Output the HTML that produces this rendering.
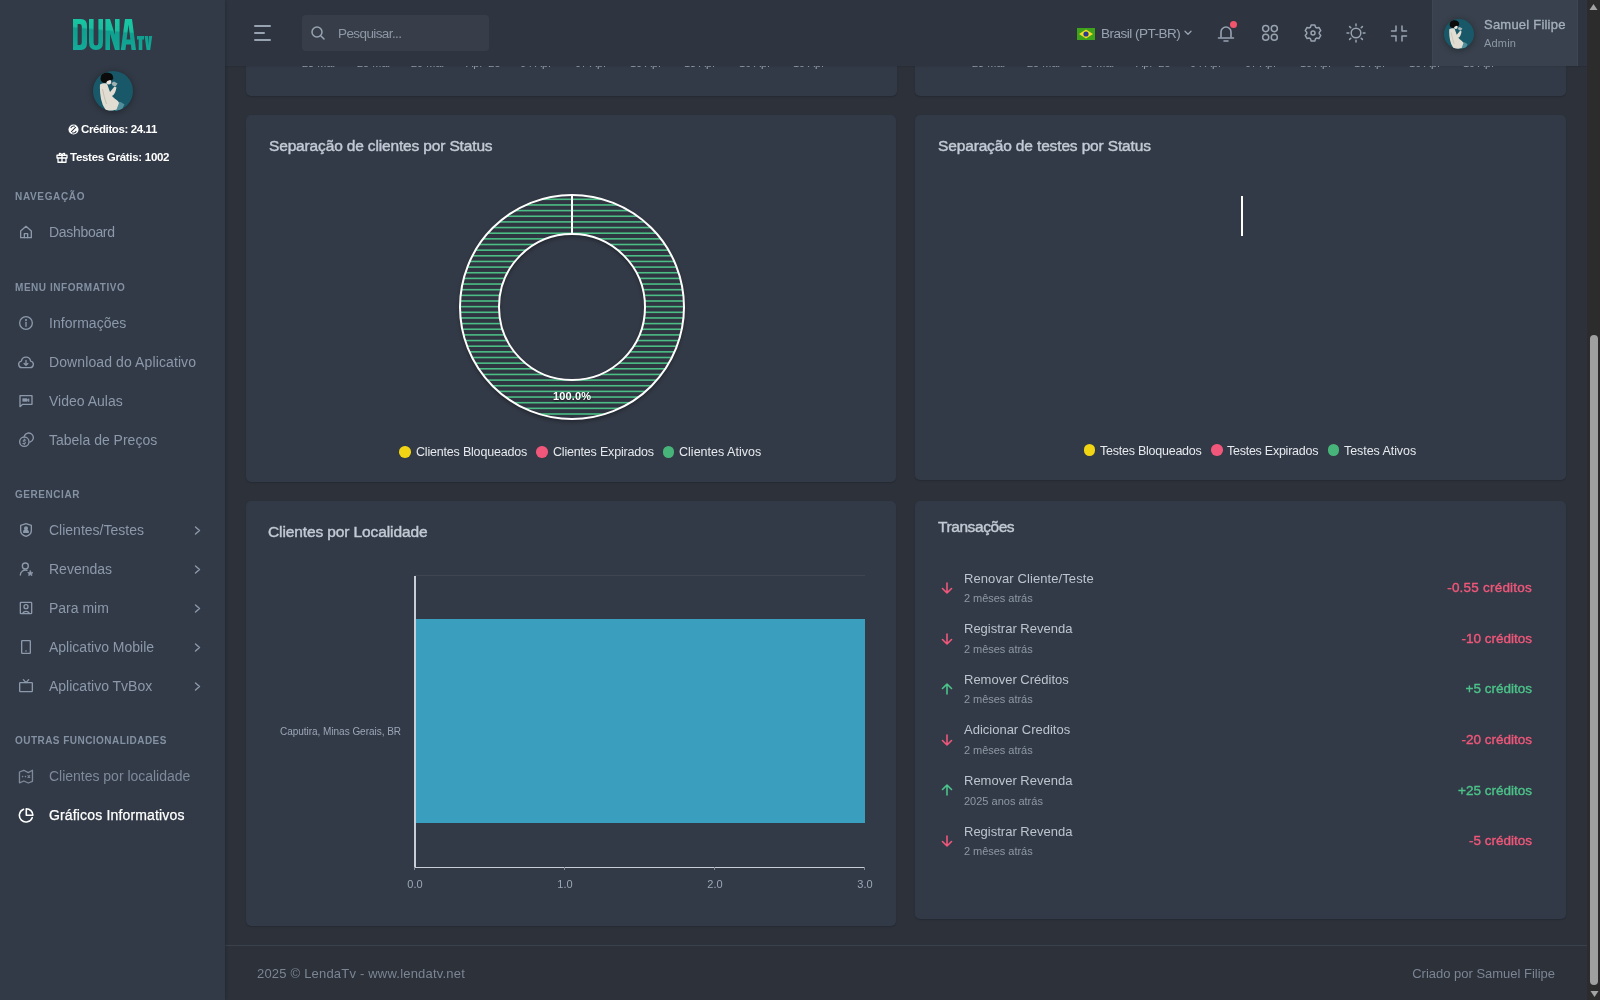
<!DOCTYPE html>
<html lang="pt-BR">
<head>
<meta charset="utf-8">
<title>Gráficos Informativos</title>
<style>
*{box-sizing:border-box;margin:0;padding:0}
html,body{width:1600px;height:1000px;overflow:hidden;background:#2c313a;font-family:"Liberation Sans",sans-serif;}
.abs{position:absolute;white-space:nowrap}
.abs svg{display:block}
.tx{position:absolute;white-space:nowrap;will-change:transform}
#side{position:absolute;left:0;top:0;width:225px;height:1000px;background:#323a47;z-index:6;box-shadow:1px 0 3px rgba(0,0,0,.18)}
#top{position:absolute;left:225px;top:0;width:1362px;height:66px;background:#2f3540;z-index:5;box-shadow:0 1px 1px rgba(0,0,0,.06)}
#content{position:absolute;left:0;top:0;width:1600px;height:1000px}
.card{position:absolute;background:#333a47;border-radius:5px;box-shadow:0 1px 1.5px rgba(0,0,0,.16)}
#scroll{position:absolute;left:1587px;top:0;width:13px;height:1000px;background:#2c2c2c;z-index:9}
</style>
</head>
<body>
<div id="content"><div class="card" style="left:246px;top:-200px;width:650.5px;height:295.5px"></div><div class="card" style="left:915px;top:-200px;width:651px;height:295.5px"></div><div class="tx" id="axl0" style="left:302.0px;top:58.19px;font-size:11px;line-height:11px;font-weight:normal;color:#98a3b1;letter-spacing:0.000px;">23 Mar</div><div class="tx" id="axr0" style="left:972.0px;top:58.19px;font-size:11px;line-height:11px;font-weight:normal;color:#98a3b1;letter-spacing:0.000px;">23 Mar</div><div class="tx" id="axl1" style="left:356.6px;top:58.19px;font-size:11px;line-height:11px;font-weight:normal;color:#98a3b1;letter-spacing:0.000px;">25 Mar</div><div class="tx" id="axr1" style="left:1026.6px;top:58.19px;font-size:11px;line-height:11px;font-weight:normal;color:#98a3b1;letter-spacing:0.000px;">25 Mar</div><div class="tx" id="axl2" style="left:411.2px;top:58.19px;font-size:11px;line-height:11px;font-weight:normal;color:#98a3b1;letter-spacing:0.000px;">29 Mar</div><div class="tx" id="axr2" style="left:1081.2px;top:58.19px;font-size:11px;line-height:11px;font-weight:normal;color:#98a3b1;letter-spacing:0.000px;">29 Mar</div><div class="tx" id="axl3" style="left:465.8px;top:58.19px;font-size:11px;line-height:11px;font-weight:normal;color:#98a3b1;letter-spacing:0.000px;">Apr '25</div><div class="tx" id="axr3" style="left:1135.8px;top:58.19px;font-size:11px;line-height:11px;font-weight:normal;color:#98a3b1;letter-spacing:0.000px;">Apr '25</div><div class="tx" id="axl4" style="left:520.4px;top:58.19px;font-size:11px;line-height:11px;font-weight:normal;color:#98a3b1;letter-spacing:0.000px;">04 Apr</div><div class="tx" id="axr4" style="left:1190.4px;top:58.19px;font-size:11px;line-height:11px;font-weight:normal;color:#98a3b1;letter-spacing:0.000px;">04 Apr</div><div class="tx" id="axl5" style="left:575.0px;top:58.19px;font-size:11px;line-height:11px;font-weight:normal;color:#98a3b1;letter-spacing:0.000px;">07 Apr</div><div class="tx" id="axr5" style="left:1245.0px;top:58.19px;font-size:11px;line-height:11px;font-weight:normal;color:#98a3b1;letter-spacing:0.000px;">07 Apr</div><div class="tx" id="axl6" style="left:629.6px;top:58.19px;font-size:11px;line-height:11px;font-weight:normal;color:#98a3b1;letter-spacing:0.000px;">10 Apr</div><div class="tx" id="axr6" style="left:1299.6px;top:58.19px;font-size:11px;line-height:11px;font-weight:normal;color:#98a3b1;letter-spacing:0.000px;">10 Apr</div><div class="tx" id="axl7" style="left:684.2px;top:58.19px;font-size:11px;line-height:11px;font-weight:normal;color:#98a3b1;letter-spacing:0.000px;">13 Apr</div><div class="tx" id="axr7" style="left:1354.2px;top:58.19px;font-size:11px;line-height:11px;font-weight:normal;color:#98a3b1;letter-spacing:0.000px;">13 Apr</div><div class="tx" id="axl8" style="left:738.8px;top:58.19px;font-size:11px;line-height:11px;font-weight:normal;color:#98a3b1;letter-spacing:0.000px;">16 Apr</div><div class="tx" id="axr8" style="left:1408.8px;top:58.19px;font-size:11px;line-height:11px;font-weight:normal;color:#98a3b1;letter-spacing:0.000px;">16 Apr</div><div class="tx" id="axl9" style="left:793.4000000000001px;top:58.19px;font-size:11px;line-height:11px;font-weight:normal;color:#98a3b1;letter-spacing:0.000px;">19 Apr</div><div class="tx" id="axr9" style="left:1463.4px;top:58.19px;font-size:11px;line-height:11px;font-weight:normal;color:#98a3b1;letter-spacing:0.000px;">19 Apr</div><div class="card" style="left:246px;top:115px;width:650.3px;height:367px"></div><div class="card" style="left:915px;top:115px;width:651px;height:365px"></div><div class="tx" id="c2t" style="left:268.9px;top:138.28px;font-size:15.5px;line-height:15.5px;font-weight:normal;color:#c2cad5;letter-spacing:-0.153px;-webkit-text-stroke:0.43px #c2cad5;">Separação de clientes por Status</div><div class="tx" id="c3t" style="left:938px;top:138.28px;font-size:15.5px;line-height:15.5px;font-weight:normal;color:#c2cad5;letter-spacing:-0.143px;-webkit-text-stroke:0.43px #c2cad5;">Separação de testes por Status</div><svg class="abs" style="left:452px;top:187px" width="240" height="240" viewBox="0 0 240 240">
<defs><clipPath id="dn"><path fill-rule="evenodd" d="M120,8A112,112 0 1 0 120.01,8ZM120,47A73,73 0 1 1 119.99,47Z"/></clipPath>
<filter id="sh" x="-20%" y="-20%" width="140%" height="140%"><feDropShadow dx="0" dy="2" stdDeviation="2.5" flood-color="#000" flood-opacity="0.45"/></filter></defs>
<circle cx="120" cy="120" r="92.5" fill="none" stroke="#313843" stroke-width="39" filter="url(#sh)"/>
<g clip-path="url(#dn)"><rect width="240" height="240" fill="#2f3541"/><g transform="translate(0,11.5)"><rect x="0" y="0.00" width="240" height="1.6" fill="#4cbd85"/><rect x="0" y="5.65" width="240" height="1.6" fill="#4cbd85"/><rect x="0" y="11.30" width="240" height="1.6" fill="#4cbd85"/><rect x="0" y="16.95" width="240" height="1.6" fill="#4cbd85"/><rect x="0" y="22.60" width="240" height="1.6" fill="#4cbd85"/><rect x="0" y="28.25" width="240" height="1.6" fill="#4cbd85"/><rect x="0" y="33.90" width="240" height="1.6" fill="#4cbd85"/><rect x="0" y="39.55" width="240" height="1.6" fill="#4cbd85"/><rect x="0" y="45.20" width="240" height="1.6" fill="#4cbd85"/><rect x="0" y="50.85" width="240" height="1.6" fill="#4cbd85"/><rect x="0" y="56.50" width="240" height="1.6" fill="#4cbd85"/><rect x="0" y="62.15" width="240" height="1.6" fill="#4cbd85"/><rect x="0" y="67.80" width="240" height="1.6" fill="#4cbd85"/><rect x="0" y="73.45" width="240" height="1.6" fill="#4cbd85"/><rect x="0" y="79.10" width="240" height="1.6" fill="#4cbd85"/><rect x="0" y="84.75" width="240" height="1.6" fill="#4cbd85"/><rect x="0" y="90.40" width="240" height="1.6" fill="#4cbd85"/><rect x="0" y="96.05" width="240" height="1.6" fill="#4cbd85"/><rect x="0" y="101.70" width="240" height="1.6" fill="#4cbd85"/><rect x="0" y="107.35" width="240" height="1.6" fill="#4cbd85"/><rect x="0" y="113.00" width="240" height="1.6" fill="#4cbd85"/><rect x="0" y="118.65" width="240" height="1.6" fill="#4cbd85"/><rect x="0" y="124.30" width="240" height="1.6" fill="#4cbd85"/><rect x="0" y="129.95" width="240" height="1.6" fill="#4cbd85"/><rect x="0" y="135.60" width="240" height="1.6" fill="#4cbd85"/><rect x="0" y="141.25" width="240" height="1.6" fill="#4cbd85"/><rect x="0" y="146.90" width="240" height="1.6" fill="#4cbd85"/><rect x="0" y="152.55" width="240" height="1.6" fill="#4cbd85"/><rect x="0" y="158.20" width="240" height="1.6" fill="#4cbd85"/><rect x="0" y="163.85" width="240" height="1.6" fill="#4cbd85"/><rect x="0" y="169.50" width="240" height="1.6" fill="#4cbd85"/><rect x="0" y="175.15" width="240" height="1.6" fill="#4cbd85"/><rect x="0" y="180.80" width="240" height="1.6" fill="#4cbd85"/><rect x="0" y="186.45" width="240" height="1.6" fill="#4cbd85"/><rect x="0" y="192.10" width="240" height="1.6" fill="#4cbd85"/><rect x="0" y="197.75" width="240" height="1.6" fill="#4cbd85"/><rect x="0" y="203.40" width="240" height="1.6" fill="#4cbd85"/><rect x="0" y="209.05" width="240" height="1.6" fill="#4cbd85"/><rect x="0" y="214.70" width="240" height="1.6" fill="#4cbd85"/><rect x="0" y="220.35" width="240" height="1.6" fill="#4cbd85"/><rect x="0" y="226.00" width="240" height="1.6" fill="#4cbd85"/><rect x="0" y="231.65" width="240" height="1.6" fill="#4cbd85"/><rect x="0" y="237.30" width="240" height="1.6" fill="#4cbd85"/><rect x="0" y="242.95" width="240" height="1.6" fill="#4cbd85"/><rect x="0" y="248.60" width="240" height="1.6" fill="#4cbd85"/></g></g>
<circle cx="120" cy="120" r="112" fill="none" stroke="#fff" stroke-width="2"/>
<circle cx="120" cy="120" r="73" fill="none" stroke="#fff" stroke-width="2"/>
<path d="M120 8V47" stroke="#fff" stroke-width="2"/>
</svg><div class="tx" id="pct" style="left:422px;width:300px;text-align:center;top:391.19px;font-size:11px;line-height:11px;font-weight:bold;color:#ffffff;letter-spacing:0.138px;text-shadow:0 1px 2px rgba(0,0,0,.6)">100.0%</div><div class="abs" style="left:399.4px;top:446.45px;width:11.5px;height:11.5px;border-radius:50%;background:#f1d413"></div><div class="tx" id="lg1" style="left:415.9px;top:446.02px;font-size:12.5px;line-height:12.5px;font-weight:normal;color:#e6e9ed;letter-spacing:-0.193px;">Clientes Bloqueados</div><div class="abs" style="left:536.25px;top:446.45px;width:11.5px;height:11.5px;border-radius:50%;background:#f1577a"></div><div class="tx" id="lg2" style="left:552.5px;top:446.02px;font-size:12.5px;line-height:12.5px;font-weight:normal;color:#e6e9ed;letter-spacing:-0.189px;">Clientes Expirados</div><div class="abs" style="left:662.5px;top:446.45px;width:11.5px;height:11.5px;border-radius:50%;background:#47b57a"></div><div class="tx" id="lg3" style="left:678.8px;top:446.02px;font-size:12.5px;line-height:12.5px;font-weight:normal;color:#e6e9ed;letter-spacing:0.015px;">Clientes Ativos</div><div class="abs" style="left:1083.5px;top:444.35px;width:11.5px;height:11.5px;border-radius:50%;background:#f1d413"></div><div class="tx" id="lg4" style="left:1100px;top:444.62px;font-size:12.5px;line-height:12.5px;font-weight:normal;color:#e6e9ed;letter-spacing:-0.240px;">Testes Bloqueados</div><div class="abs" style="left:1211px;top:444.35px;width:11.5px;height:11.5px;border-radius:50%;background:#f1577a"></div><div class="tx" id="lg5" style="left:1227.2px;top:444.62px;font-size:12.5px;line-height:12.5px;font-weight:normal;color:#e6e9ed;letter-spacing:-0.252px;">Testes Expirados</div><div class="abs" style="left:1327.8px;top:444.35px;width:11.5px;height:11.5px;border-radius:50%;background:#47b57a"></div><div class="tx" id="lg6" style="left:1344px;top:444.62px;font-size:12.5px;line-height:12.5px;font-weight:normal;color:#e6e9ed;letter-spacing:-0.063px;">Testes Ativos</div><div class="abs" style="left:1240.5px;top:195.5px;width:2px;height:40px;background:#fff"></div><div class="card" style="left:246px;top:501px;width:650.3px;height:424.6px"></div><div class="tx" id="c4t" style="left:268.4px;top:523.68px;font-size:15.5px;line-height:15.5px;font-weight:normal;color:#c2cad5;letter-spacing:-0.109px;-webkit-text-stroke:0.43px #c2cad5;">Clientes por Localidade</div><div class="abs" style="left:414.5px;top:575px;width:450px;height:1px;background:#3f4652"></div><div class="abs" style="left:414px;top:619.2px;width:450.7px;height:204.3px;background:#3a9ebf"></div><div class="abs" style="left:414px;top:575.5px;width:1.5px;height:292px;background:#c9ced6"></div><div class="abs" style="left:414px;top:866.5px;width:451px;height:1.5px;background:#c9ced6"></div><div class="abs" style="left:414.1px;top:867px;width:1px;height:3px;background:#7f8793"></div><div class="tx" id="xt0" style="left:264.6px;width:300px;text-align:center;top:878.69px;font-size:11px;line-height:11px;font-weight:normal;color:#9aa6b6;letter-spacing:0.000px;">0.0</div><div class="abs" style="left:564.13px;top:867px;width:1px;height:3px;background:#7f8793"></div><div class="tx" id="xt1" style="left:414.63px;width:300px;text-align:center;top:878.69px;font-size:11px;line-height:11px;font-weight:normal;color:#9aa6b6;letter-spacing:0.000px;">1.0</div><div class="abs" style="left:714.1600000000001px;top:867px;width:1px;height:3px;background:#7f8793"></div><div class="tx" id="xt2" style="left:564.6600000000001px;width:300px;text-align:center;top:878.69px;font-size:11px;line-height:11px;font-weight:normal;color:#9aa6b6;letter-spacing:0.000px;">2.0</div><div class="abs" style="left:864.19px;top:867px;width:1px;height:3px;background:#7f8793"></div><div class="tx" id="xt3" style="left:714.69px;width:300px;text-align:center;top:878.69px;font-size:11px;line-height:11px;font-weight:normal;color:#9aa6b6;letter-spacing:0.000px;">3.0</div><div class="tx" id="ylab" style="left:0.6999999999999886px;width:400px;text-align:right;top:727.33px;font-size:10px;line-height:10px;font-weight:normal;color:#9aa6b6;letter-spacing:-0.029px;">Caputira, Minas Gerais, BR</div><div class="card" style="left:915px;top:501px;width:651px;height:418px"></div><div class="tx" id="c5t" style="left:937.7px;top:518.58px;font-size:15.5px;line-height:15.5px;font-weight:normal;color:#c2cad5;letter-spacing:-0.423px;-webkit-text-stroke:0.43px #c2cad5;">Transações</div><div class="abs" style="left:940.5px;top:582.0px;color:#f1577a"><svg width="12" height="12" viewBox="0 0 12 12" fill="none" stroke="currentColor" stroke-width="1.6" stroke-linecap="round" stroke-linejoin="round" ><path d="M6 1v10M1.5 6.5L6 11l4.5-4.5"/></svg></div><div class="tx" id="ra0" style="left:964.4px;top:571.50px;font-size:13px;line-height:13px;font-weight:normal;color:#bcc4cf;letter-spacing:0.090px;">Renovar Cliente/Teste</div><div class="tx" id="rb0" style="left:964.4px;top:593.19px;font-size:11px;line-height:11px;font-weight:normal;color:#8e98a5;letter-spacing:-0.033px;">2 mêses atrás</div><div class="tx" id="rc0" style="left:1132.4px;width:400px;text-align:right;top:581.07px;font-size:13.5px;line-height:13.5px;font-weight:normal;color:#f1577a;letter-spacing:0.216px;-webkit-text-stroke:0.38px #f1577a;">-0.55 créditos</div><div class="abs" style="left:940.5px;top:632.62px;color:#f1577a"><svg width="12" height="12" viewBox="0 0 12 12" fill="none" stroke="currentColor" stroke-width="1.6" stroke-linecap="round" stroke-linejoin="round" ><path d="M6 1v10M1.5 6.5L6 11l4.5-4.5"/></svg></div><div class="tx" id="ra1" style="left:964.4px;top:622.12px;font-size:13px;line-height:13px;font-weight:normal;color:#bcc4cf;letter-spacing:0.000px;">Registrar Revenda</div><div class="tx" id="rb1" style="left:964.4px;top:643.81px;font-size:11px;line-height:11px;font-weight:normal;color:#8e98a5;letter-spacing:-0.033px;">2 mêses atrás</div><div class="tx" id="rc1" style="left:1132.4px;width:400px;text-align:right;top:631.69px;font-size:13.5px;line-height:13.5px;font-weight:normal;color:#f1577a;letter-spacing:0.000px;-webkit-text-stroke:0.38px #f1577a;">-10 créditos</div><div class="abs" style="left:940.5px;top:683.24px;color:#4bc38a"><svg width="12" height="12" viewBox="0 0 12 12" fill="none" stroke="currentColor" stroke-width="1.6" stroke-linecap="round" stroke-linejoin="round" ><path d="M6 11V1M1.5 5.5L6 1l4.5 4.5"/></svg></div><div class="tx" id="ra2" style="left:964.4px;top:672.74px;font-size:13px;line-height:13px;font-weight:normal;color:#bcc4cf;letter-spacing:0.000px;">Remover Créditos</div><div class="tx" id="rb2" style="left:964.4px;top:694.43px;font-size:11px;line-height:11px;font-weight:normal;color:#8e98a5;letter-spacing:-0.033px;">2 mêses atrás</div><div class="tx" id="rc2" style="left:1132.4px;width:400px;text-align:right;top:682.31px;font-size:13.5px;line-height:13.5px;font-weight:normal;color:#4bc38a;letter-spacing:0.000px;-webkit-text-stroke:0.38px #4bc38a;">+5 créditos</div><div class="abs" style="left:940.5px;top:733.86px;color:#f1577a"><svg width="12" height="12" viewBox="0 0 12 12" fill="none" stroke="currentColor" stroke-width="1.6" stroke-linecap="round" stroke-linejoin="round" ><path d="M6 1v10M1.5 6.5L6 11l4.5-4.5"/></svg></div><div class="tx" id="ra3" style="left:964.4px;top:723.36px;font-size:13px;line-height:13px;font-weight:normal;color:#bcc4cf;letter-spacing:0.000px;">Adicionar Creditos</div><div class="tx" id="rb3" style="left:964.4px;top:745.05px;font-size:11px;line-height:11px;font-weight:normal;color:#8e98a5;letter-spacing:-0.033px;">2 mêses atrás</div><div class="tx" id="rc3" style="left:1132.4px;width:400px;text-align:right;top:732.93px;font-size:13.5px;line-height:13.5px;font-weight:normal;color:#f1577a;letter-spacing:0.000px;-webkit-text-stroke:0.38px #f1577a;">-20 créditos</div><div class="abs" style="left:940.5px;top:784.48px;color:#4bc38a"><svg width="12" height="12" viewBox="0 0 12 12" fill="none" stroke="currentColor" stroke-width="1.6" stroke-linecap="round" stroke-linejoin="round" ><path d="M6 11V1M1.5 5.5L6 1l4.5 4.5"/></svg></div><div class="tx" id="ra4" style="left:964.4px;top:773.98px;font-size:13px;line-height:13px;font-weight:normal;color:#bcc4cf;letter-spacing:0.000px;">Remover Revenda</div><div class="tx" id="rb4" style="left:964.4px;top:795.67px;font-size:11px;line-height:11px;font-weight:normal;color:#8e98a5;letter-spacing:0.000px;">2025 anos atrás</div><div class="tx" id="rc4" style="left:1132.4px;width:400px;text-align:right;top:783.55px;font-size:13.5px;line-height:13.5px;font-weight:normal;color:#4bc38a;letter-spacing:0.000px;-webkit-text-stroke:0.38px #4bc38a;">+25 créditos</div><div class="abs" style="left:940.5px;top:835.1px;color:#f1577a"><svg width="12" height="12" viewBox="0 0 12 12" fill="none" stroke="currentColor" stroke-width="1.6" stroke-linecap="round" stroke-linejoin="round" ><path d="M6 1v10M1.5 6.5L6 11l4.5-4.5"/></svg></div><div class="tx" id="ra5" style="left:964.4px;top:824.60px;font-size:13px;line-height:13px;font-weight:normal;color:#bcc4cf;letter-spacing:0.000px;">Registrar Revenda</div><div class="tx" id="rb5" style="left:964.4px;top:846.29px;font-size:11px;line-height:11px;font-weight:normal;color:#8e98a5;letter-spacing:-0.033px;">2 mêses atrás</div><div class="tx" id="rc5" style="left:1132.4px;width:400px;text-align:right;top:834.17px;font-size:13.5px;line-height:13.5px;font-weight:normal;color:#f1577a;letter-spacing:0.000px;-webkit-text-stroke:0.38px #f1577a;">-5 créditos</div><div class="abs" style="left:225px;top:945px;width:1362px;height:1px;background:#3a414b"></div><div class="tx" id="f1" style="left:257.2px;top:967.00px;font-size:13px;line-height:13px;font-weight:normal;color:#7b8594;letter-spacing:0.201px;">2025 © LendaTv - www.lendatv.net</div><div class="tx" id="f2" style="left:1155px;width:400px;text-align:right;top:967.00px;font-size:13px;line-height:13px;font-weight:normal;color:#7b8594;letter-spacing:-0.012px;">Criado por Samuel Filipe</div></div>
<div id="side"><svg class="abs" style="left:0;top:0" width="225" height="60" viewBox="0 0 225 60">
<defs><linearGradient id="lg" x1="76" y1="19" x2="73" y2="50" gradientUnits="userSpaceOnUse">
<stop offset="0" stop-color="#18c4a2"/><stop offset="0.24" stop-color="#17bf9f"/><stop offset="0.30" stop-color="#0f9f8e"/><stop offset="0.7" stop-color="#11a594"/><stop offset="1" stop-color="#15ad9a"/></linearGradient></defs>
<g fill="url(#lg)" fill-rule="evenodd">
<path d="M73,19H81Q87,19 87,26V43Q87,50 81,50H73ZM77.6,24V45H79.6Q81.8,45 81.8,42V27Q81.8,24 79.6,24Z"/>
<path d="M89,19H93.6V43Q93.6,45.5 96,45.5Q98.4,45.5 98.4,43V19H103V42Q103,50 96,50Q89,50 89,42Z"/>
<path d="M105.4,19H110L115,35V19H119.6V50H115L110,33.5V50H105.4Z"/>
<path d="M120.8,50L125,19H132L136,50H131.5L130.9,44.5H126.1L125.4,50ZM126.6,39.5H130.4L128.5,24.5Z"/>
<path d="M137,36H144V39.6H142.3V50H138.7V39.6H137Z"/>
<path d="M144.6,36H148L148.4,45.5L148.9,36H152.2L150.2,50H146.6Z"/>
</g></svg><svg class="abs" style="left:93px;top:71px;filter:drop-shadow(0 1px 3px rgba(0,0,0,.35))" width="40" height="40" viewBox="0 0 40 40">
<defs><clipPath id="ca"><circle cx="20" cy="20" r="20"/></clipPath></defs>
<circle cx="20" cy="20" r="20" fill="#195868"/>
<g clip-path="url(#ca)">
<path d="M21.5,31 Q27,29.5 31.5,33.5 L29,38.5 Q25,40 22,39.5 Z" fill="#4f8e9a"/>
<path d="M7,13.5 Q10,11.5 14,12.5 L17,21 L21.5,15.5 L23.5,16.5 Q22,24 19,25 L21,27 Q25,29.5 26,32 L23.5,38.5 Q17,40.5 13,39.5 Q9,34 8,28 Q6.5,20 7,13.5 Z" fill="#e2ddd2"/>
<path d="M9.5,18 Q11,26 13.5,33" stroke="#c2bcaf" stroke-width="0.9" fill="none"/>
<path d="M18.5,12 L21,10.5 L24.5,12.5 L22.5,15.5 L19.5,14.5 Z" fill="#9fb3b5"/>
<ellipse cx="15.8" cy="10.8" rx="2.4" ry="2.6" fill="#efe5de"/>
<path d="M7.5,8 Q7.5,1.5 13.5,1.5 Q20.5,1.5 20.3,7.5 Q19.5,10 17,9 Q14,9.5 12.5,12 Q8,12 7.5,8 Z" fill="#0b0b0b"/>
</g></svg><svg class="abs" style="left:67.5px;top:124px" width="11" height="11" viewBox="0 0 24 24"><circle cx="12" cy="12" r="11" fill="#fff"/><path d="M6 9a7 7 0 0 1 9-4M18 15a7 7 0 0 1-9 4M7 17l10-10" stroke="#313a46" stroke-width="2.4" fill="none"/></svg><svg class="abs" style="left:56px;top:151.5px" width="12" height="11" viewBox="0 0 24 22" fill="none" stroke="#fff" stroke-width="2.6" stroke-linejoin="round"><rect x="2" y="6.5" width="20" height="5.5"/><path d="M4 12v8.5h16V12M12 6.5v14M12 6.5C9.5 1 4.5 2.5 7.5 6.5M12 6.5c2.5-5.5 7.5-4 4.5 0"/></svg><div class="tx" id="cred" style="left:81px;top:124.27px;font-size:11.5px;line-height:11.5px;font-weight:bold;color:#ffffff;letter-spacing:-0.395px;">Créditos: 24.11</div><div class="tx" id="test" style="left:69.5px;top:151.77px;font-size:11.5px;line-height:11.5px;font-weight:bold;color:#ffffff;letter-spacing:-0.285px;">Testes Grátis: 1002</div><div class="tx" id="mt_NAVE" style="left:15px;top:191.84px;font-size:10px;line-height:10px;font-weight:bold;color:#8391a2;letter-spacing:0.654px;">NAVEGAÇÃO</div><div class="abs" style="left:18px;top:224px;color:#8c99aa"><svg width="16" height="16" viewBox="0 0 24 24" fill="none" stroke="currentColor" stroke-width="2" stroke-linecap="round" stroke-linejoin="round" ><path d="M4 10.5L12 3.5L20 10.5V20.5H4Z"/><path d="M9.5 20.5V14.5H14.5V20.5"/></svg></div><div class="tx" id="mi_home" style="left:48.5px;top:225.15px;font-size:14px;line-height:14px;font-weight:normal;color:#8c99aa;letter-spacing:-0.312px;">Dashboard</div><div class="tx" id="mt_MENU" style="left:15px;top:282.54px;font-size:10px;line-height:10px;font-weight:bold;color:#8391a2;letter-spacing:0.550px;">MENU INFORMATIVO</div><div class="abs" style="left:18px;top:315px;color:#8c99aa"><svg width="16" height="16" viewBox="0 0 24 24" fill="none" stroke="currentColor" stroke-width="2" stroke-linecap="round" stroke-linejoin="round" ><circle cx="12" cy="12" r="9.5"/><path d="M12 11v6"/><circle cx="12" cy="7.6" r="0.6" fill="currentColor"/></svg></div><div class="tx" id="mi_info" style="left:48.5px;top:316.15px;font-size:14px;line-height:14px;font-weight:normal;color:#8c99aa;letter-spacing:0.025px;">Informações</div><div class="abs" style="left:18px;top:354px;color:#8c99aa"><svg width="16" height="16" viewBox="0 0 24 24" fill="none" stroke="currentColor" stroke-width="2" stroke-linecap="round" stroke-linejoin="round" ><path d="M6,20.5A5,5 0 0 1 5.08,10.58A7,7 0 0 1 18.92,10.58A5,5 0 0 1 18,20.5Z"/><path d="M12 9.5v7.5M9.2 14.3l2.8 2.8 2.8-2.8"/></svg></div><div class="tx" id="mi_cloud" style="left:48.5px;top:355.15px;font-size:14px;line-height:14px;font-weight:normal;color:#8c99aa;letter-spacing:0.106px;">Download do Aplicativo</div><div class="abs" style="left:18px;top:393px;color:#8c99aa"><svg width="16" height="16" viewBox="0 0 24 24" fill="none" stroke="currentColor" stroke-width="2" stroke-linecap="round" stroke-linejoin="round" ><path d="M3 4h18v13H7l-4 3.5Z"/><path d="M7.5 8.5h6v4h-6zM13.5 10.5l3-2v4z" fill="currentColor" stroke-width="1"/></svg></div><div class="tx" id="mi_video" style="left:48.5px;top:394.15px;font-size:14px;line-height:14px;font-weight:normal;color:#8c99aa;letter-spacing:0.000px;">Video Aulas</div><div class="abs" style="left:18px;top:432px;color:#8c99aa"><svg width="16" height="16" viewBox="0 0 24 24" fill="none" stroke="currentColor" stroke-width="2" stroke-linecap="round" stroke-linejoin="round" ><circle cx="9.5" cy="14.5" r="7"/><path d="M9.3 6.3A7 7 0 1 1 17.9 15.2"/><path d="M11.6 12.2H9a1.3 1.3 0 0 0 0 2.6h1a1.3 1.3 0 0 1 0 2.6H7.3M9.5 10.6v1.4M9.5 17.4v1.4" stroke-width="1.5"/></svg></div><div class="tx" id="mi_coins" style="left:48.5px;top:433.15px;font-size:14px;line-height:14px;font-weight:normal;color:#8c99aa;letter-spacing:0.000px;">Tabela de Preços</div><div class="tx" id="mt_GERE" style="left:15px;top:489.54px;font-size:10px;line-height:10px;font-weight:bold;color:#8391a2;letter-spacing:0.550px;">GERENCIAR</div><div class="abs" style="left:18px;top:522px;color:#8c99aa"><svg width="16" height="16" viewBox="0 0 24 24" fill="none" stroke="currentColor" stroke-width="2" stroke-linecap="round" stroke-linejoin="round" ><path d="M12 2.5L20 5v8c0 4-3.5 7-8 8.5C7.5 20 4 17 4 13V5Z"/><circle cx="12" cy="9.5" r="2" fill="currentColor"/><path d="M8.5 15.5a3.5 3.5 0 0 1 7 0Z" fill="currentColor"/></svg></div><div class="tx" id="mi_shield" style="left:48.5px;top:523.15px;font-size:14px;line-height:14px;font-weight:normal;color:#8c99aa;letter-spacing:0.000px;">Clientes/Testes</div><div class="abs" style="left:194px;top:526px;color:#8c99aa"><svg width="7" height="9" viewBox="0 0 7 9" fill="none" stroke="currentColor" stroke-width="1.4" stroke-linecap="round" stroke-linejoin="round" ><path d="M1.5 1l4 3.5-4 3.5"/></svg></div><div class="abs" style="left:18px;top:561px;color:#8c99aa"><svg width="16" height="16" viewBox="0 0 24 24" fill="none" stroke="currentColor" stroke-width="2" stroke-linecap="round" stroke-linejoin="round" ><circle cx="11" cy="7.5" r="4.5"/><path d="M3.5 21a7.5 7.5 0 0 1 10-7"/><path d="M18.5 14.5l1.3 2.6 2.7.3-2 1.9.5 2.7-2.5-1.3-2.5 1.3.5-2.7-2-1.9 2.7-.3z" fill="currentColor" stroke-width="1"/></svg></div><div class="tx" id="mi_userstar" style="left:48.5px;top:562.15px;font-size:14px;line-height:14px;font-weight:normal;color:#8c99aa;letter-spacing:0.000px;">Revendas</div><div class="abs" style="left:194px;top:565px;color:#8c99aa"><svg width="7" height="9" viewBox="0 0 7 9" fill="none" stroke="currentColor" stroke-width="1.4" stroke-linecap="round" stroke-linejoin="round" ><path d="M1.5 1l4 3.5-4 3.5"/></svg></div><div class="abs" style="left:18px;top:600px;color:#8c99aa"><svg width="16" height="16" viewBox="0 0 24 24" fill="none" stroke="currentColor" stroke-width="2" stroke-linecap="round" stroke-linejoin="round" ><rect x="3.5" y="3.5" width="17" height="17" rx="1"/><circle cx="12" cy="10" r="3"/><path d="M7 20a5.5 5 0 0 1 10 0"/></svg></div><div class="tx" id="mi_account" style="left:48.5px;top:601.15px;font-size:14px;line-height:14px;font-weight:normal;color:#8c99aa;letter-spacing:0.000px;">Para mim</div><div class="abs" style="left:194px;top:604px;color:#8c99aa"><svg width="7" height="9" viewBox="0 0 7 9" fill="none" stroke="currentColor" stroke-width="1.4" stroke-linecap="round" stroke-linejoin="round" ><path d="M1.5 1l4 3.5-4 3.5"/></svg></div><div class="abs" style="left:18px;top:639px;color:#8c99aa"><svg width="16" height="16" viewBox="0 0 24 24" fill="none" stroke="currentColor" stroke-width="2" stroke-linecap="round" stroke-linejoin="round" ><rect x="5.5" y="2.5" width="13" height="19" rx="1"/><path d="M12 18h.01" stroke-width="2.4"/></svg></div><div class="tx" id="mi_phone" style="left:48.5px;top:640.15px;font-size:14px;line-height:14px;font-weight:normal;color:#8c99aa;letter-spacing:0.000px;">Aplicativo Mobile</div><div class="abs" style="left:194px;top:643px;color:#8c99aa"><svg width="7" height="9" viewBox="0 0 7 9" fill="none" stroke="currentColor" stroke-width="1.4" stroke-linecap="round" stroke-linejoin="round" ><path d="M1.5 1l4 3.5-4 3.5"/></svg></div><div class="abs" style="left:18px;top:678px;color:#8c99aa"><svg width="16" height="16" viewBox="0 0 24 24" fill="none" stroke="currentColor" stroke-width="2" stroke-linecap="round" stroke-linejoin="round" ><rect x="2.5" y="7" width="19" height="13.5" rx="1"/><path d="M8 2.5l4 4.5 4-4.5"/></svg></div><div class="tx" id="mi_tv" style="left:48.5px;top:679.15px;font-size:14px;line-height:14px;font-weight:normal;color:#8c99aa;letter-spacing:0.000px;">Aplicativo TvBox</div><div class="abs" style="left:194px;top:682px;color:#8c99aa"><svg width="7" height="9" viewBox="0 0 7 9" fill="none" stroke="currentColor" stroke-width="1.4" stroke-linecap="round" stroke-linejoin="round" ><path d="M1.5 1l4 3.5-4 3.5"/></svg></div><div class="tx" id="mt_OUTR" style="left:15px;top:735.83px;font-size:10px;line-height:10px;font-weight:bold;color:#8391a2;letter-spacing:0.463px;">OUTRAS FUNCIONALIDADES</div><div class="abs" style="left:18px;top:768px;color:#7e8a9a"><svg width="16" height="16" viewBox="0 0 24 24" fill="none" stroke="currentColor" stroke-width="2" stroke-linecap="round" stroke-linejoin="round" ><path d="M2.2,6L8.8,3.4L15.4,6.9L21.7,3.4V20L15.4,22.5L8.8,19.5L2.2,22.2Z"/><circle cx="6.9" cy="12.9" r="1.2" fill="currentColor" stroke="none"/><circle cx="11.2" cy="12.9" r="1.2" fill="currentColor" stroke="none"/><path d="M14.9 11.5l2.8 2.8M17.7 11.5l-2.8 2.8" stroke-width="1.6"/></svg></div><div class="tx" id="mi_map" style="left:48.5px;top:769.15px;font-size:14px;line-height:14px;font-weight:normal;color:#7e8a9a;letter-spacing:-0.015px;">Clientes por localidade</div><div class="abs" style="left:18px;top:807px;color:#ffffff"><svg width="16" height="16" viewBox="0 0 16 16" fill="none" stroke="currentColor" stroke-width="1.6" stroke-linecap="round" stroke-linejoin="round" ><path d="M5.53,2.28A6.6,6.6 0 1 0 14.2,10.66"/><path d="M8.3,1.7V8.3H14.9A6.6,6.6 0 0 0 8.3,1.7Z"/></svg></div><div class="tx" id="mi_pie" style="left:48.5px;top:808.15px;font-size:14px;line-height:14px;font-weight:normal;color:#ffffff;letter-spacing:0.157px;-webkit-text-stroke:0.25px #ffffff;">Gráficos Informativos</div></div>
<div id="top"><div class="abs" style="left:29px;top:25px;width:17px;height:2px;background:#98a3b1;border-radius:1px"></div><div class="abs" style="left:29px;top:32px;width:11px;height:2px;background:#98a3b1;border-radius:1px"></div><div class="abs" style="left:29px;top:38.5px;width:17px;height:2px;background:#98a3b1;border-radius:1px"></div><div class="abs" style="left:77px;top:15px;width:187px;height:35.5px;background:#373e49;border-radius:4px"></div><div class="abs" style="left:86px;top:25.5px;color:#98a3b1"><svg width="14" height="14" viewBox="0 0 14 14" fill="none" stroke="currentColor" stroke-width="1.5" stroke-linecap="round" stroke-linejoin="round" ><circle cx="6" cy="6" r="5"/><path d="M10 10l3 3"/></svg></div><div class="tx" id="search" style="left:113.30000000000001px;top:26.87px;font-size:13.5px;line-height:13.5px;font-weight:normal;color:#8d98a6;letter-spacing:-0.595px;">Pesquisar...</div><svg class="abs" style="left:852px;top:27.5px" width="18" height="12" viewBox="0 0 18 12"><rect width="18" height="12" fill="#3ea21b"/><path d="M9 1.5L16 6 9 10.5 2 6Z" fill="#f3dc22"/><circle cx="9" cy="6" r="2.6" fill="#2a3b8f"/></svg><div class="tx" id="lang" style="left:875.8px;top:26.77px;font-size:13.5px;line-height:13.5px;font-weight:normal;color:#98a3b1;letter-spacing:-0.505px;">Brasil (PT-BR)</div><div class="abs" style="left:959px;top:30px;color:#98a3b1"><svg width="8" height="6" viewBox="0 0 8 6" fill="none" stroke="currentColor" stroke-width="1.3" stroke-linecap="round" stroke-linejoin="round" ><path d="M1 1.2l3 3 3-3"/></svg></div><div class="abs" style="left:992px;top:23px;color:#98a3b1"><svg width="18" height="19" viewBox="0 0 18 19" fill="none" stroke="currentColor" stroke-width="1.6" stroke-linecap="round" stroke-linejoin="round" ><path d="M4 14V9a5 5 0 0 1 10 0v5"/><path d="M1.5 15h15M7 18h4"/></svg></div><div class="abs" style="left:1004.5px;top:20.5px;width:7.5px;height:7.5px;border-radius:50%;background:#f1556c"></div><div class="abs" style="left:1036px;top:24px;color:#98a3b1"><svg width="18" height="18" viewBox="0 0 18 18" fill="none" stroke="currentColor" stroke-width="1.5" stroke-linecap="round" stroke-linejoin="round" ><circle cx="4.7" cy="4.6" r="3.05"/><circle cx="13.3" cy="4.6" r="3.05"/><circle cx="4.7" cy="13.2" r="3.05"/><circle cx="13.3" cy="13.2" r="3.05"/></svg></div><div class="abs" style="left:1079px;top:24px;color:#98a3b1"><svg width="18" height="18" viewBox="0 0 18 18" fill="none" stroke="currentColor" stroke-width="1.5" stroke-linecap="round" stroke-linejoin="round" ><polygon points="6.44,3.24 7.18,1.11 10.82,1.11 11.56,3.24 12.70,3.90 14.92,3.48 16.75,6.63 15.27,8.34 15.27,9.66 16.75,11.37 14.92,14.52 12.70,14.10 11.56,14.76 10.82,16.89 7.18,16.89 6.44,14.76 5.30,14.10 3.08,14.52 1.25,11.37 2.73,9.66 2.73,8.34 1.25,6.63 3.08,3.48 5.30,3.90"/><circle cx="9" cy="9" r="2"/></svg></div><div class="abs" style="left:1121px;top:23px;color:#98a3b1"><svg width="20" height="20" viewBox="0 0 20 20" fill="none" stroke="currentColor" stroke-width="1.5" stroke-linecap="round" stroke-linejoin="round" ><circle cx="10" cy="10" r="4.8"/><path d="M10 1v1.8M10 17.2V19M1 10h1.8M17.2 10H19M3.6 3.6l1.2 1.2M15.2 15.2l1.2 1.2M3.6 16.4l1.2-1.2M15.2 4.8l1.2-1.2"/></svg></div><div class="abs" style="left:1165px;top:24.5px;color:#98a3b1"><svg width="18" height="17" viewBox="0 0 18 17" fill="none" stroke="currentColor" stroke-width="1.5" stroke-linecap="round" stroke-linejoin="round" stroke-linecap="butt" stroke-linejoin="miter"><path d="M6 1v5H1.5M12 1v5h4.5M6 16v-5H1.5M12 16v-5h4.5"/></svg></div><div class="abs" style="left:1207px;top:0;width:146px;height:65.5px;background:#38414d;border-left:1px solid #3d4754;border-right:1px solid #3d4754"></div><svg class="abs" style="left:1219px;top:18.5px;filter:drop-shadow(0 1px 3px rgba(0,0,0,.35))" width="30" height="30" viewBox="0 0 40 40">
<defs><clipPath id="cb"><circle cx="20" cy="20" r="20"/></clipPath></defs>
<circle cx="20" cy="20" r="20" fill="#195868"/>
<g clip-path="url(#cb)">
<path d="M21.5,31 Q27,29.5 31.5,33.5 L29,38.5 Q25,40 22,39.5 Z" fill="#4f8e9a"/>
<path d="M7,13.5 Q10,11.5 14,12.5 L17,21 L21.5,15.5 L23.5,16.5 Q22,24 19,25 L21,27 Q25,29.5 26,32 L23.5,38.5 Q17,40.5 13,39.5 Q9,34 8,28 Q6.5,20 7,13.5 Z" fill="#e2ddd2"/>
<path d="M9.5,18 Q11,26 13.5,33" stroke="#c2bcaf" stroke-width="0.9" fill="none"/>
<path d="M18.5,12 L21,10.5 L24.5,12.5 L22.5,15.5 L19.5,14.5 Z" fill="#9fb3b5"/>
<ellipse cx="15.8" cy="10.8" rx="2.4" ry="2.6" fill="#efe5de"/>
<path d="M7.5,8 Q7.5,1.5 13.5,1.5 Q20.5,1.5 20.3,7.5 Q19.5,10 17,9 Q14,9.5 12.5,12 Q8,12 7.5,8 Z" fill="#0b0b0b"/>
</g></svg><div class="tx" id="uname" style="left:1258.9px;top:18.00px;font-size:13px;line-height:13px;font-weight:normal;color:#a3aebb;letter-spacing:0.220px;-webkit-text-stroke:0.36px #a3aebb;">Samuel Filipe</div><div class="tx" id="urole" style="left:1258.9px;top:37.69px;font-size:11px;line-height:11px;font-weight:normal;color:#8d98a6;letter-spacing:0.203px;">Admin</div></div>
<div id="scroll">
<svg class="abs" style="left:2px;top:3px" width="9" height="8" viewBox="0 0 9 8"><path d="M4.5 1L8.5 7H0.5Z" fill="#a3a3a3"/></svg>
<div class="abs" style="left:2.5px;top:335px;width:8.5px;height:650px;border-radius:4.5px;background:#a0a0a0"></div>
<svg class="abs" style="left:2.5px;top:990px" width="9" height="8" viewBox="0 0 9 8"><path d="M0.5 1H8.5L4.5 7Z" fill="#a3a3a3"/></svg>
</div>
</body>
</html>
